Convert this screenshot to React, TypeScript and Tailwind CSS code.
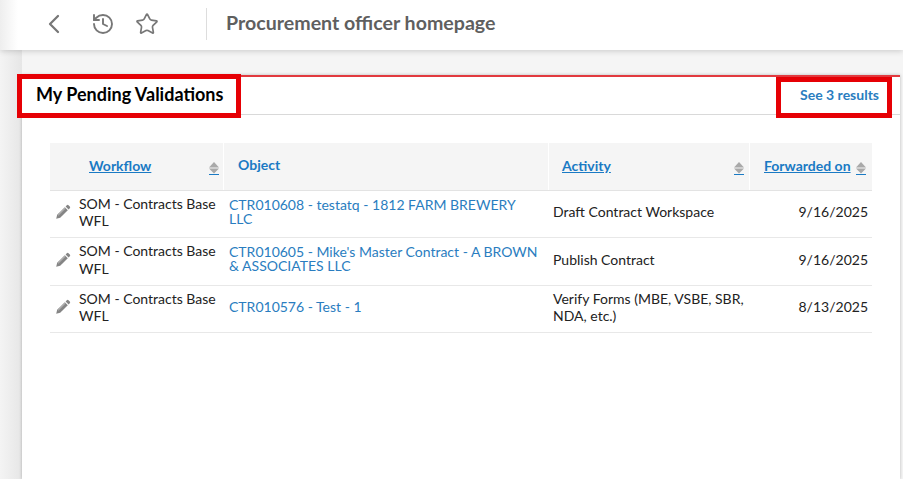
import React from 'react';
import { ChevronLeft, History, Star } from 'lucide-react';

const rows = [
  { object: 'CTR010608 - testatq - 1812 FARM BREWERY LLC', activity: 'Draft Contract Workspace', date: '9/16/2025', height: 'h-[47px]', link: '' },
  { object: "CTR010605 - Mike's Master Contract - A BROWN & ASSOCIATES LLC", activity: 'Publish Contract', date: '9/16/2025', height: 'h-[48px]', link: '-mt-[1px]' },
  { object: 'CTR010576 - Test - 1', activity: 'Verify Forms (MBE, VSBE, SBR, NDA, etc.)', date: '8/13/2025', height: 'h-[47px]', link: '' },
];

const SortIcon = () => (
  <svg width="10" height="13" viewBox="0 0 10 13" className="shrink-0 mt-[4px]">
    <path d="M5 0 L10 5.5 H0 Z" fill="#a9a9a9" />
    <path d="M0 6.5 H10 L5 11.5 Z" fill="#a9a9a9" />
    <rect x="0" y="12" width="10" height="1" fill="#1a7ac4" />
  </svg>
);

const Pencil = () => (
  <svg width="16" height="16" viewBox="0 0 16 16" className="shrink-0">
    <path d="M11.8 1.2 a1.2 1.2 0 0 1 1.7 0 l1.3 1.3 a1.2 1.2 0 0 1 0 1.7 l-1.2 1.2 -3 -3 Z" fill="#858585" />
    <path d="M9.8 3.2 l3 3 -7.6 7.6 -4 1 1 -4 Z" fill="#858585" />
    <path d="M3.2 11.2 L10.4 4" stroke="#d8d8d8" strokeWidth="0.8" />
  </svg>
);

const App: React.FC = () => {
  return (
    <div className="relative flex flex-col w-[903px] h-[479px] overflow-hidden bg-[#f5f5f5] font-['Lato',sans-serif]">
      {/* Left edge shadow */}
      <div className="absolute left-0 top-[50px] bottom-0 w-[22px] bg-gradient-to-r from-[#f4f4f4] to-[#e6e6e6]" />

      {/* Top bar */}
      <div className="relative z-10 shrink-0 h-[50px] bg-gradient-to-r from-[#eeeeee] to-white to-[18px] shadow-[0_1px_6px_rgba(0,0,0,0.18)] flex items-center pl-[38px] pb-[2px]">
        <ChevronLeft className="w-[32px] h-[32px] text-[#777]" strokeWidth={1.7} />
        <History className="w-[24px] h-[24px] text-[#777] ml-[21px]" strokeWidth={1.9} />
        <Star className="w-[24px] h-[24px] text-[#777] ml-[20px]" strokeWidth={1.7} />
        <div className="w-px h-[32px] bg-[#ddd] ml-[47px]" />
        <h1 className="ml-[19px] text-[19.6px] font-bold text-[#5f5f5f] -mt-[2px]">Procurement officer homepage</h1>
      </div>

      {/* Card */}
      <div className="relative flex-1 ml-[22px] mt-[25px] w-[878px] bg-white border-t-2 border-[#e23a3f] shadow-[0_0_3px_rgba(0,0,0,0.25)]">
        <div className="h-[38px] border-b border-[#d9d9d9] flex items-center justify-between pl-[14px] pr-[21px]">
          <span className="text-[18px] font-bold text-black -mt-[3px]">My Pending Validations</span>
          <a className="text-[14px] font-bold text-[#2a7dc0] -mt-[2px]">See 3 results</a>
        </div>
        <div className="ml-[28px] mt-[28px] w-[822px]">
          <div className="grid grid-cols-[174px_325px_201px_122px] h-[48px] bg-[#f5f5f5] border-b border-[#e3e3e3] text-[14px] font-bold text-[#1a7ac4]">
            <div className="flex items-center justify-between pl-[39px] pr-[4px] border-r border-white">
              <a className="underline -mt-[2px]">Workflow</a>
              <SortIcon />
            </div>
            <div className="flex items-center pl-[14px] pb-[5px] border-r border-white">Object</div>
            <div className="flex items-center justify-between pl-[13px] pr-[5px] border-r border-white">
              <a className="underline -mt-[2px]">Activity</a>
              <SortIcon />
            </div>
            <div className="flex items-center justify-between pl-[14px] pr-[6px]">
              <a className="underline -mt-[2px]">Forwarded on</a>
              <SortIcon />
            </div>
          </div>
          {rows.map((row) => (
            <div key={row.object} className={`grid grid-cols-[174px_325px_201px_122px] ${row.height} pb-[4px] border-b border-[#e8e8e8] text-[14px] leading-[17.5px] items-center`}>
              <div className="flex items-center pl-[5px]">
                <Pencil />
                <span className="ml-[8px] text-[#222]">SOM - Contracts Base WFL</span>
              </div>
              <div className={`pl-[5px] pr-[8px] leading-[14px] text-[#2a7dc0] ${row.link}`}>{row.object}</div>
              <div className="pl-[4px] pr-[5px] text-[#222]">{row.activity}</div>
              <div className="pr-[4px] text-right text-[#222]">{row.date}</div>
            </div>
          ))}
        </div>
      </div>

      {/* Red highlight annotations */}
      <div className="absolute z-20 left-[17px] top-[74px] w-[224px] h-[44px] border-[5px] border-[#e60005]" />
      <div className="absolute z-20 left-[776px] top-[77px] w-[116px] h-[41px] border-[5px] border-[#e60005]" />
    </div>
  );
};

export default App;
